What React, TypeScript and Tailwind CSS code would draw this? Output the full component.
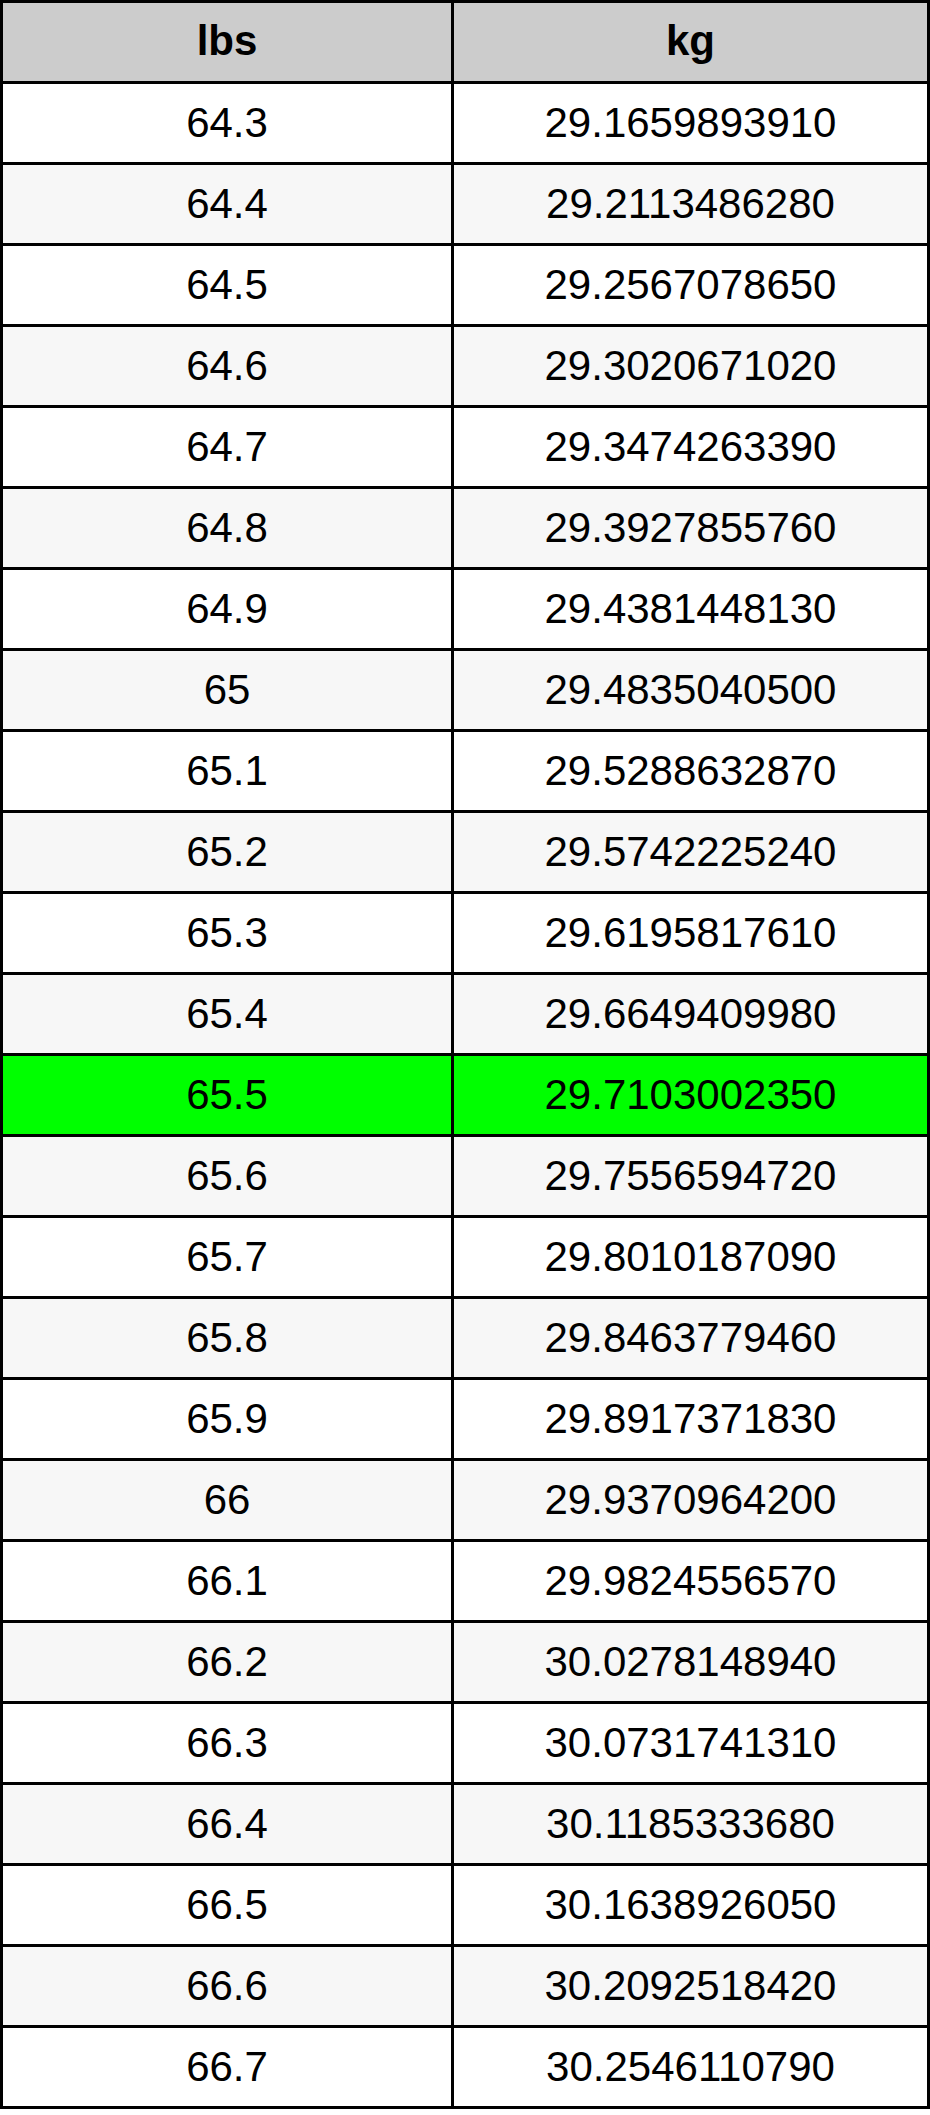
import React from "react";

const rows: [string, string][] = [
  ["64.3", "29.1659893910"],
  ["64.4", "29.2113486280"],
  ["64.5", "29.2567078650"],
  ["64.6", "29.3020671020"],
  ["64.7", "29.3474263390"],
  ["64.8", "29.3927855760"],
  ["64.9", "29.4381448130"],
  ["65", "29.4835040500"],
  ["65.1", "29.5288632870"],
  ["65.2", "29.5742225240"],
  ["65.3", "29.6195817610"],
  ["65.4", "29.6649409980"],
  ["65.5", "29.7103002350"],
  ["65.6", "29.7556594720"],
  ["65.7", "29.8010187090"],
  ["65.8", "29.8463779460"],
  ["65.9", "29.8917371830"],
  ["66", "29.9370964200"],
  ["66.1", "29.9824556570"],
  ["66.2", "30.0278148940"],
  ["66.3", "30.0731741310"],
  ["66.4", "30.1185333680"],
  ["66.5", "30.1638926050"],
  ["66.6", "30.2092518420"],
  ["66.7", "30.2546110790"],
];

export default function App() {
  return (
    <div className="w-[930px] bg-white font-['Liberation_Sans',Arial,sans-serif] text-black">
      <div className="grid grid-cols-[448px_473px] gap-[3px] bg-black p-[3px]">
        <div className="flex h-[78px] items-center justify-center bg-[#cccccc] pb-[4px] text-[42px] font-bold">lbs</div>
        <div className="flex h-[78px] items-center justify-center bg-[#cccccc] pb-[4px] text-[42px] font-bold">kg</div>
        {rows.map(([a, b], i) => {
          const bg =
            a === "65.5" ? "bg-[#00ff00]" : i % 2 === 1 ? "bg-[#f7f7f7]" : "bg-white";
          return (
            <React.Fragment key={a}>
              <div className={`flex h-[78px] items-center justify-center pb-[2px] text-[42px] ${bg}`}>{a}</div>
              <div className={`flex h-[78px] items-center justify-center pb-[2px] text-[42px] ${bg}`}>{b}</div>
            </React.Fragment>
          );
        })}
      </div>
    </div>
  );
}
